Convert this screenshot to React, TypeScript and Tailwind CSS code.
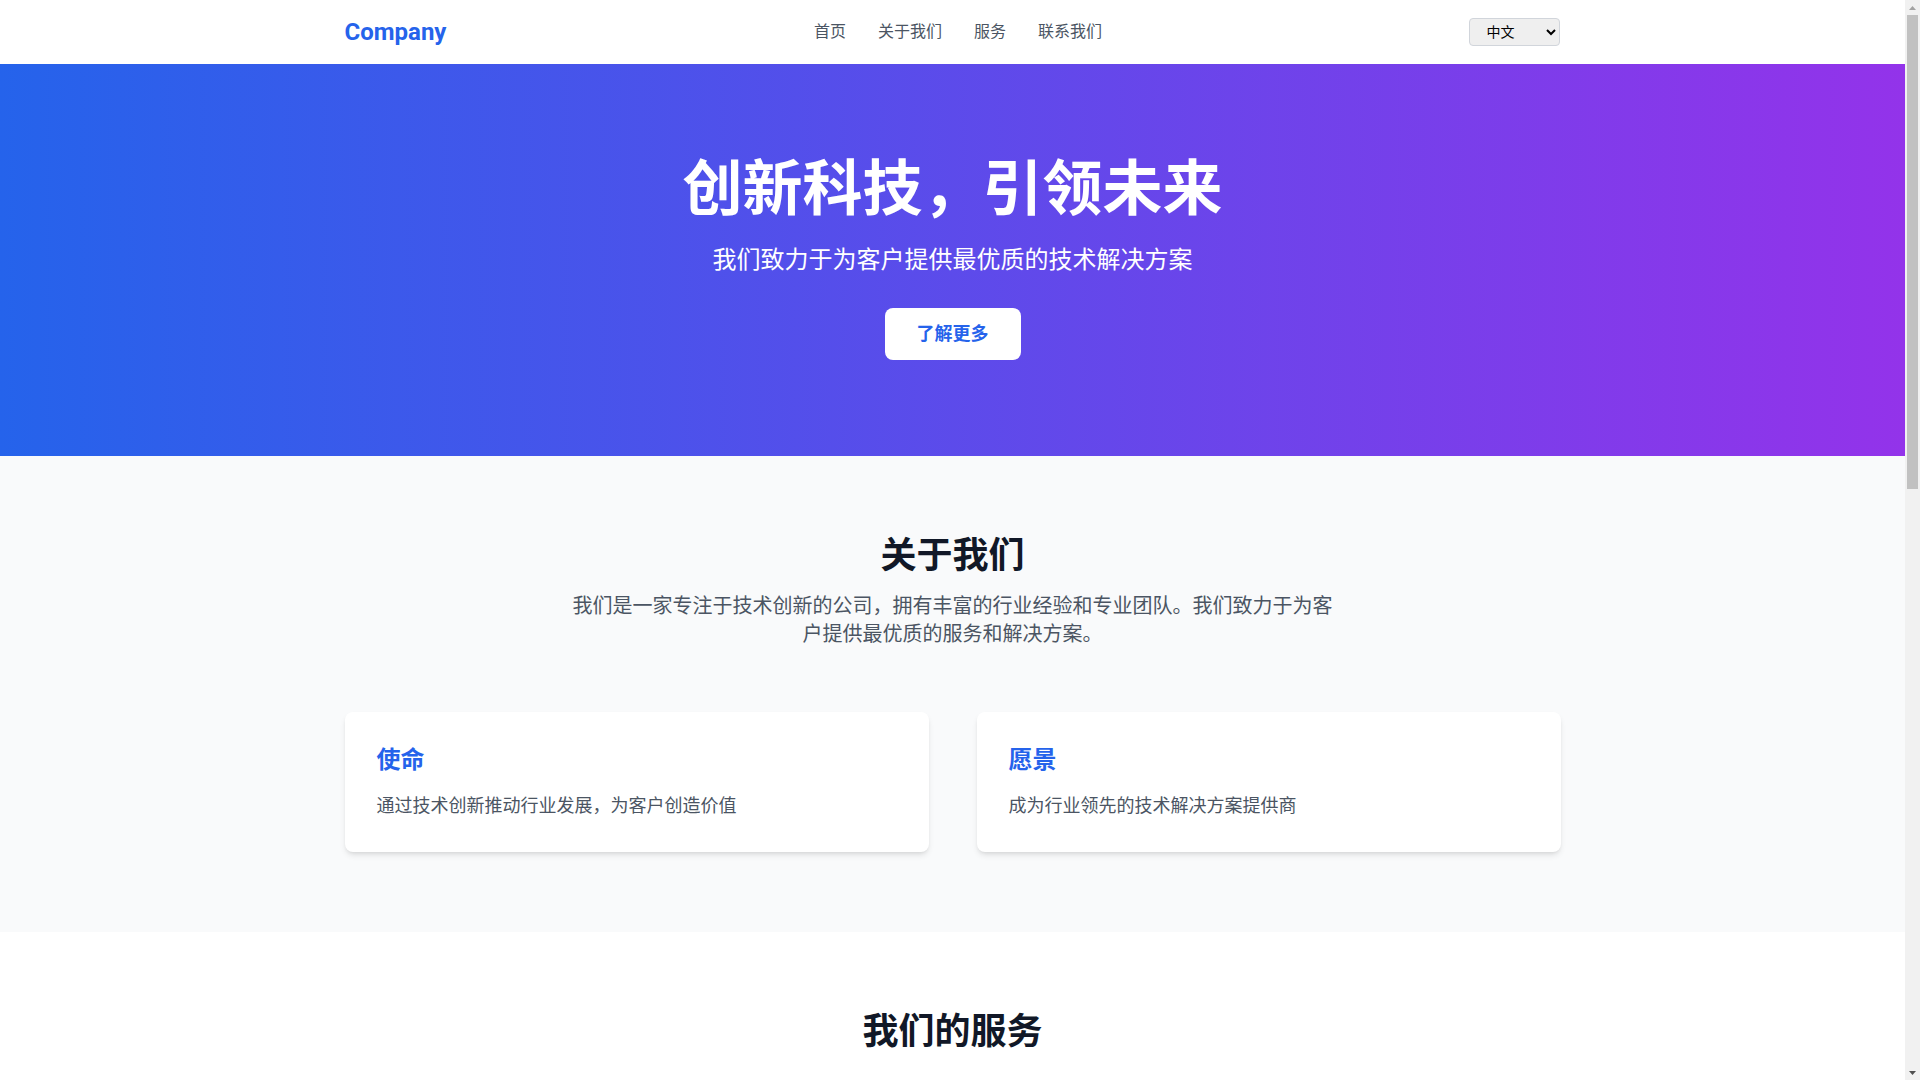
import { useState } from "react";

const font = {
  fontFamily: '"Roboto", "Noto Sans CJK SC", sans-serif',
};

const navLinks = ["首页", "关于我们", "服务", "联系我们"];

const services = [
  { title: "软件开发", desc: "定制化的软件解决方案，满足您的业务需求" },
  { title: "云计算服务", desc: "安全可靠的云端基础设施与运维支持" },
  { title: "数据分析", desc: "深入挖掘数据价值，助力科学决策" },
];

// classic browser scrollbar, drawn since the renderer hides the real one
function ScrollBar() {
  return (
    <div className="w-[15px] h-screen shrink-0 bg-[#f1f1f1] flex flex-col items-center">
      <div className="h-[15px] flex items-center justify-center">
        <svg width="7" height="4" viewBox="0 0 7 4">
          <path d="M3.5 0L7 4H0z" fill="#a3a3a3" />
        </svg>
      </div>
      <div className="w-[11px] h-[474px] bg-[#c1c1c1]" />
      <div className="flex-1" />
      <div className="h-[15px] flex items-center justify-center">
        <svg width="7" height="4" viewBox="0 0 7 4">
          <path d="M0 0h7L3.5 4z" fill="#505050" />
        </svg>
      </div>
    </div>
  );
}

export default function App() {
  const [lang, setLang] = useState("zh");

  return (
    <div className="flex h-screen overflow-hidden" style={font}>
      <div className="flex-1 min-w-0 h-screen overflow-y-auto bg-white text-[#111827] [scrollbar-width:none]">
        {/* header */}
        <header className="bg-white">
          <div className="max-w-7xl mx-auto px-8 h-16 flex items-center justify-between">
            <a href="#" className="text-2xl font-bold text-[#2563eb]">
              Company
            </a>
            <nav className="flex items-center gap-8">
              {navLinks.map((l) => (
                <a key={l} href="#" className="text-base text-[#4b5563] hover:text-[#2563eb]">
                  {l}
                </a>
              ))}
            </nav>
            <select
              value={lang}
              onChange={(e) => setLang(e.target.value)}
              className="w-[91px] h-[28px] pl-3 pr-1 text-sm text-black bg-[#efefef] border border-[#d1d5db] rounded"
            >
              <option value="zh">中文</option>
              <option value="en">English</option>
            </select>
          </div>
        </header>

        {/* hero */}
        <section className="bg-linear-to-r/srgb from-[#2563eb] to-[#9333ea] text-white py-24">
          <div className="max-w-7xl mx-auto px-8 flex flex-col items-center text-center">
            <h1 className="text-6xl font-bold mb-6">创新科技，引领未来</h1>
            <p className="text-2xl mb-8">我们致力于为客户提供最优质的技术解决方案</p>
            <button className="bg-white text-[#2563eb] text-lg font-semibold px-8 py-3 rounded-lg">
              了解更多
            </button>
          </div>
        </section>

        {/* about */}
        <section className="bg-[#f9fafb] py-20">
          <div className="max-w-7xl mx-auto px-8">
            <h2 className="text-4xl font-bold text-center mb-4">关于我们</h2>
            <p className="text-xl leading-7 text-[#4b5563] text-center max-w-3xl mx-auto mb-16">
              我们是一家专注于技术创新的公司，拥有丰富的行业经验和专业团队。我们致力于为客户提供最优质的服务和解决方案。
            </p>
            <div className="grid grid-cols-2 gap-12">
              <div className="bg-white rounded-lg shadow-md p-8">
                <h3 className="text-2xl font-semibold text-[#2563eb] mb-4">使命</h3>
                <p className="text-lg text-[#4b5563]">通过技术创新推动行业发展，为客户创造价值</p>
              </div>
              <div className="bg-white rounded-lg shadow-md p-8">
                <h3 className="text-2xl font-semibold text-[#2563eb] mb-4">愿景</h3>
                <p className="text-lg text-[#4b5563]">成为行业领先的技术解决方案提供商</p>
              </div>
            </div>
          </div>
        </section>

        {/* services */}
        <section className="bg-white py-20">
          <div className="max-w-7xl mx-auto px-8">
            <h2 className="text-4xl font-bold text-center mb-16">我们的服务</h2>
            <div className="grid grid-cols-3 gap-8">
              {services.map((s) => (
                <div key={s.title} className="bg-white rounded-lg shadow-md p-8 text-center">
                  <div className="w-16 h-16 mx-auto mb-6 rounded-full bg-[#dbeafe] flex items-center justify-center">
                    <svg className="w-8 h-8 text-[#2563eb]" fill="none" stroke="currentColor" strokeWidth={2} viewBox="0 0 24 24">
                      <path d="M13 10V3L4 14h7v7l9-11h-7z" />
                    </svg>
                  </div>
                  <h3 className="text-xl font-semibold mb-3">{s.title}</h3>
                  <p className="text-[#4b5563]">{s.desc}</p>
                </div>
              ))}
            </div>
          </div>
        </section>

        {/* contact */}
        <section className="bg-[#f9fafb] py-20">
          <div className="max-w-7xl mx-auto px-8">
            <h2 className="text-4xl font-bold text-center mb-16">联系我们</h2>
            <form className="max-w-2xl mx-auto bg-white rounded-lg shadow-md p-8 flex flex-col gap-6">
              <div className="flex flex-col gap-2">
                <label className="text-sm font-medium text-[#374151]">姓名</label>
                <input className="border border-[#d1d5db] rounded-lg px-4 py-2" />
              </div>
              <div className="flex flex-col gap-2">
                <label className="text-sm font-medium text-[#374151]">邮箱</label>
                <input className="border border-[#d1d5db] rounded-lg px-4 py-2" />
              </div>
              <div className="flex flex-col gap-2">
                <label className="text-sm font-medium text-[#374151]">留言</label>
                <textarea rows={5} className="border border-[#d1d5db] rounded-lg px-4 py-2" />
              </div>
              <button type="button" className="bg-[#2563eb] text-white font-semibold py-3 rounded-lg">
                发送消息
              </button>
            </form>
          </div>
        </section>

        {/* footer */}
        <footer className="bg-[#1f2937] text-[#d1d5db] py-16">
          <div className="max-w-7xl mx-auto px-8 text-center">
            <p>© 2024 Company. 保留所有权利。</p>
          </div>
        </footer>
      </div>
      <ScrollBar />
    </div>
  );
}
